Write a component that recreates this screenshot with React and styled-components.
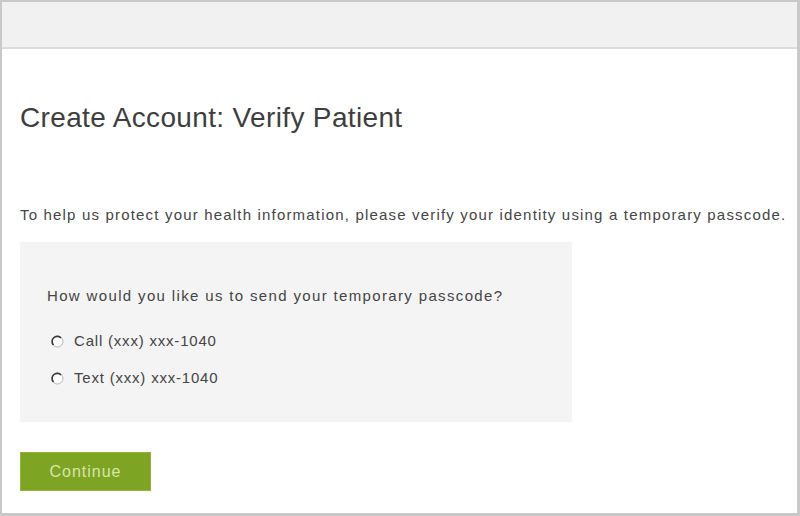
import React from "react";
import styled, { createGlobalStyle } from "styled-components";

const GlobalStyle = createGlobalStyle`
  html, body {
    margin: 0;
    padding: 0;
    background: #ffffff;
  }
  body {
    font-family: "Liberation Sans", Arial, sans-serif;
  }
`;

const Frame = styled.div`
  box-sizing: border-box;
  width: 800px;
  height: 516px;
  border: 2px solid #c9c9c9;
  border-right-width: 3px;
  border-bottom-width: 3px;
  background: #ffffff;
  overflow: hidden;
`;

const TopBar = styled.div`
  height: 45px;
  background: #f1f1f1;
  border-bottom: 2px solid #dcdcdc;
`;

const Content = styled.div`
  padding: 53px 0 0 18px;
`;

const Title = styled.h1`
  margin: 0;
  font-size: 28px;
  line-height: 32px;
  font-weight: normal;
  letter-spacing: 0.35px;
  color: #3e3e3e;
`;

const Intro = styled.p`
  margin: 72px 0 0;
  font-size: 15px;
  line-height: 18px;
  color: #454545;
  letter-spacing: 1.18px;
  white-space: nowrap;
`;

const OptionsBox = styled.div`
  box-sizing: border-box;
  width: 552px;
  height: 180px;
  margin-top: 18px;
  padding: 45px 0 0 27px;
  background: #f4f4f4;
`;

const Question = styled.div`
  font-size: 15px;
  line-height: 18px;
  color: #454545;
  letter-spacing: 1.35px;
`;

const OptionList = styled.div`
  display: flex;
  flex-direction: column;
  gap: 19px;
  margin-top: 27px;
  padding-left: 4px;
`;

const Option = styled.label`
  display: flex;
  align-items: center;
  gap: 10px;
  font-size: 15px;
  line-height: 18px;
  color: #454545;
  letter-spacing: 0.8px;
`;

const Button = styled.button`
  box-sizing: border-box;
  width: 131px;
  height: 39px;
  margin-top: 30px;
  border: 1px solid #93b43a;
  background: #7ea424;
  color: #d8e6a8;
  font-family: "Liberation Sans", Arial, sans-serif;
  font-size: 16px;
  letter-spacing: 1px;
  padding: 0;
`;

const Radio = () => (
  <svg width="13" height="13" viewBox="0 0 13 13">
    <circle cx="6.5" cy="6.5" r="5.5" fill="#fdfdfd" stroke="#b5b5b5" />
    <path
      d="M10 3 A5 5 0 0 0 2.5 10"
      fill="none"
      stroke="#3a3a3a"
      strokeWidth="1.6"
    />
  </svg>
);

export default function App() {
  return (
    <>
      <GlobalStyle />
      <Frame>
        <TopBar />
        <Content>
          <Title>Create Account: Verify Patient</Title>
          <Intro>
            To help us protect your health information, please verify your
            identity using a temporary passcode.
          </Intro>
          <OptionsBox>
            <Question>
              How would you like us to send your temporary passcode?
            </Question>
            <OptionList>
              <Option>
                <Radio />
                Call (xxx) xxx-1040
              </Option>
              <Option>
                <Radio />
                Text (xxx) xxx-1040
              </Option>
            </OptionList>
          </OptionsBox>
          <Button>Continue</Button>
        </Content>
      </Frame>
    </>
  );
}
